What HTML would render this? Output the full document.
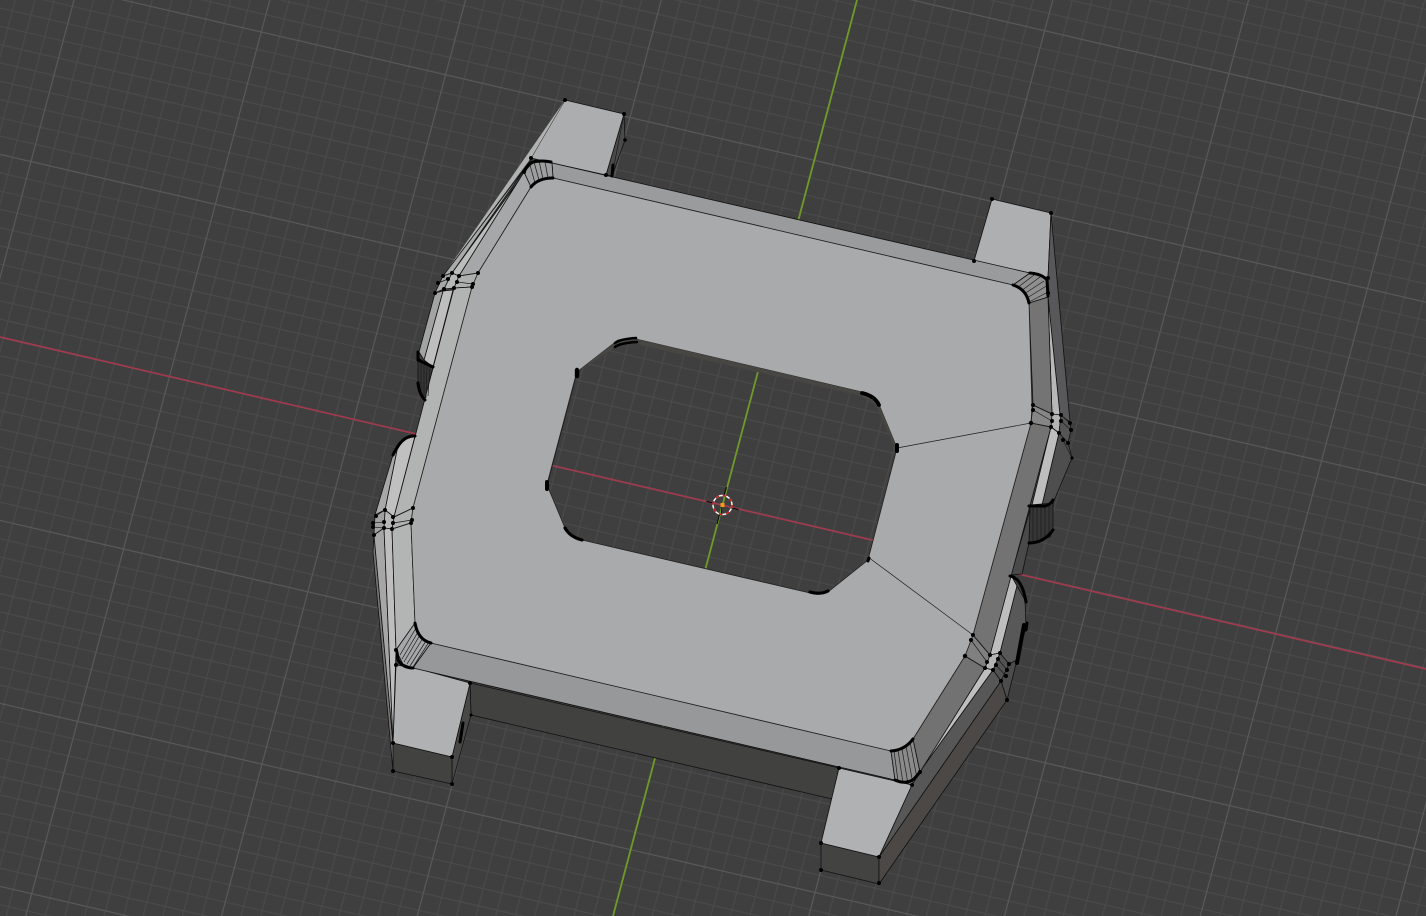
<!DOCTYPE html>
<html>
<head>
<meta charset="utf-8">
<title>Viewport</title>
<style>
html,body{margin:0;padding:0;background:#3f3f3f;width:1426px;height:916px;overflow:hidden}
svg{display:block}
</style>
</head>
<body>
<svg width="1426" height="916" viewBox="0 0 1426 916" xmlns="http://www.w3.org/2000/svg">
<defs>
<pattern id="g" patternUnits="userSpaceOnUse" x="0" y="0" width="184.36" height="172.35" patternTransform="matrix(1 .232 -.2664 1 715.58 494.244)">
<path d="M27.654 0V172.35M46.09 0V172.35M64.526 0V172.35M82.962 0V172.35M101.398 0V172.35M119.834 0V172.35M138.27 0V172.35M156.706 0V172.35M175.142 0V172.35M0 25.853H184.36M0 43.088H184.36M0 60.323H184.36M0 77.558H184.36M0 94.793H184.36M0 112.028H184.36M0 129.263H184.36M0 146.498H184.36M0 163.733H184.36" stroke="#4b4b4b" stroke-width="1" fill="none"/>
<path d="M9.218 0V172.35M0 8.6175H184.36" stroke="#5a5a5a" stroke-width="1.1" fill="none"/>
</pattern>
</defs>
<rect width="1426" height="916" fill="#3f3f3f"/>
<rect width="1426" height="916" fill="url(#g)"/>
<!-- axes -->
<line x1="0" y1="337" x2="1426" y2="669" stroke="#a03a4e" stroke-width="1.7"/>
<line x1="857" y1="0" x2="613" y2="916" stroke="#6f9a2a" stroke-width="1.8"/>

<!-- lugs and walls -->
<g stroke="#111" stroke-width=".8" stroke-linejoin="round">
<polygon points="470,683 839,768 832,799 471,715" fill="#41413f"/>
<polygon points="470,683 471,715 452,784 452,757" fill="#484847"/>
<polygon points="393,743 452,757 452,784 393,771" fill="#424240"/>
<polygon points="415,668 470,683 452,757 393,743 396,665" fill="#b0b1b3"/>
<polygon points="821,843 879,857 879,884 821,870" fill="#434341"/>
<polygon points="839,768 912,785 879,857 821,843" fill="#b0b1b3"/>
<polygon points="624,114 625,140 612,176 606,175" fill="#4a4a4a"/>
<polygon points="565,100 624,114 606,175 552,163 531,158" fill="#acadaf"/>
<polygon points="992,199 1051,213 1048,278 1030,273 974,261" fill="#aeafb1"/>

<!-- left rim -->
<polygon points="531,158 565,100 443,276" fill="#b0b1b1" stroke="none"/>
<polygon points="452,273 531,160 443,276" fill="#a9aaaa"/>
<polygon points="459,276 524,172 530,165 452,273" fill="#bbbcbc"/>
<polygon points="452,273 444,289 435,293 443,276" fill="#a6a7a7"/>
<polygon points="459,276 454,288 444,289 452,273" fill="#b6b7b7"/>
<polygon points="453,290 433,367 424,360 443,291" fill="#bebebe"/>
<polygon points="435,293 443,291 424,360 419,352" fill="#a2a3a3"/>
<polygon points="418,358 433,367 425,400 420,395 418,383" fill="#363636"/>
<polygon points="415,436 394,517 385,510 397,450 403,440" fill="#c0c0c0"/>
<polygon points="393,455 397,450 385,510 375,515" fill="#a8a8a8"/>
<polygon points="385,510 394,517 392,529 384,528" fill="#b6b6b6"/>
<polygon points="375,515 385,510 384,528 374,535" fill="#a0a0a0"/>
<polygon points="374,535 373,552 393,771 393,743" fill="#767676"/>
<polygon points="384,528 374,535 393,743" fill="#a6a6a6"/>
<polygon points="392,529 384,528 393,743 396,650" fill="#bebebe"/>

<!-- right rim -->
<polygon points="1048,278 1051,213 1070,422 1060,415 1048,297" fill="#58585a"/>
<polygon points="1048,297 1052,414 1060,415" fill="#b8b8b8"/>
<polygon points="1052,414 1061,415 1059,433 1051,427" fill="#b4b4b4"/>
<polygon points="1061,415 1070,423 1071,430 1068,443 1059,433" fill="#555"/>
<polygon points="1059,433 1068,443 1072,458 1053,503 1042,505" fill="#4e4e4e"/>
<polygon points="1051,427 1059,433 1042,505 1032,505" fill="#bebebe"/>
<polygon points="1030,505 1053,503 1053,530 1050,537 1029,543" fill="#363636"/>
<polygon points="1030,510 1029,543 1022,574 1011,575" fill="#4a4a4a"/>
<polygon points="1011,575 1017,586 1000,653 990,655" fill="#bebebe"/>
<polygon points="1017,586 1025,600 1026,627 1017,660 1009,664 1000,653" fill="#585858"/>
<polygon points="1001,681 1009,664 1017,660 1007,700" fill="#4c4c4c"/>
<polygon points="1001,681 1007,700 879,884 879,857" fill="#4b4845"/>
<polygon points="1000,653 1009,664 1001,681 993,670" fill="#525252"/>
<polygon points="993,670 1001,681 879,857 912,785 921,770" fill="#575757"/>
<polygon points="990,655 1000,653 993,670 985,668" fill="#b4b4b4"/>
<polygon points="985,668 993,670 921,770" fill="#bebebe"/>

<!-- bevel bands -->
<polygon points="478,273 531,187 524,172 459,276" fill="#a6a7a8"/>
<polygon points="478,273 472,287 454,288 459,276" fill="#aeafaf"/>
<polygon points="472,287 454,288 394,517 413,508" fill="#b2b3b3"/>
<polygon points="413,508 411,523 392,529 394,517" fill="#b0b1b1"/>
<polygon points="411,523 392,529 396,650 415,623" fill="#b3b4b4"/>
<polygon points="415,623 431,643 413,668 403,664 396,650" fill="#a6a7a8"/>
<polygon points="431,643 891,751 895,780 413,668" fill="#97989a"/>
<polygon points="891,751 913,739 920,772 912,785 895,780" fill="#8a8a8a"/>
<polygon points="913,739 965,656 985,668 920,772" fill="#727272"/>
<polygon points="965,656 973,635 990,655 985,668" fill="#808080"/>
<polygon points="1031,423 1051,427 990,655 973,635" fill="#737373"/>
<polygon points="1033,405 1052,414 1051,427 1031,423" fill="#868686"/>
<polygon points="1029,303 1048,297 1052,414 1033,405" fill="#747474"/>
<polygon points="1013,285 1029,303 1048,297 1048,278 1030,273" fill="#909090"/>
<polygon points="553,178 1013,285 1030,273 552,163" fill="#9a9b9d"/>
<polygon points="531,187 553,178 552,163 535,160 524,172" fill="#9d9e9f"/>
</g>

<!-- top face with hole -->
<path fill-rule="evenodd" fill="#a9aaac" stroke="#222" stroke-width=".8"
 d="M531 187Q538 178 553 178L1013 285Q1026 289 1029 303L1032 407L1031 423L973 635L965 656L913 739Q905 750 891 751L431 643Q418 640 415 623L411 523L413 508L472 287L478 273Z
 M577 372L618 340L636 339L862 392Q875 396 878 402L897 448L868 560L828 592L810 593L582 540Q570 537 565 528L547 485Z"/>

<!-- hole inner wall sliver -->
<polygon points="577,372 618,340 636,339 862,392 878,402 897,448 896,451 876,405 861,396 636,344 619,345" fill="#474642"/>
<polyline points="577,372 547,485" stroke="#222" stroke-width="1.2" fill="none"/>

<!-- wires -->
<g stroke="#1c1c1c" stroke-width=".7" fill="none">
<path d="M897 448L1031 423M868 557L973 635"/>
<path d="M535 183L530 165M539 180L534 162M543 179L539 161M548 178L545 162"/>
<path d="M1017 288L1034 275M1021 291L1040 277M1024 294L1044 281M1027 298L1048 285M1029 302L1048 292"/>
<path d="M894 751L898 781M898 750L903 783M902 749L908 784M906 746L913 784M910 742L917 778"/>
<path d="M416 628L400 655M418 632L402 659M420 635L404 662M423 638L407 664M426 641L410 666M429 642L413 667"/>
<path d="M421 362L421 392M424 363L424 396M427 364L426 398M430 366L428 396"/>
<path d="M1033 505L1033 541M1037 505L1037 541M1041 505L1041 540M1045 505L1045 539M1049 504L1049 537"/>
<path d="M459 276L478 273M457 282L473 284M454 288L472 287M452 273L443 276M448 279L438 283M444 289L435 293"/>
<path d="M394 517L413 508M393 523L412 520M392 529L411 523M385 510L376 516M384 522L373 523M384 528L373 527"/>
<path d="M1033 405L1052 414M1033 410L1052 421M1031 423L1051 427M1061 415L1070 423M1061 421L1071 430M1059 433L1068 443M1063 440L1072 458"/>
<path d="M973 635L990 655M971 640L987 662M965 656L985 668M1000 653L1009 664M998 659L1007 670M996 665L1006 676M993 670L1001 681"/>
<path d="M624 114L612 176"/>
</g>

<!-- thick arcs -->
<g stroke="#000" stroke-width="3" fill="none" stroke-linecap="round">
<path d="M531 187Q538 178 553 178"/>
<path d="M524 172Q527 165 533 162Q542 160 551 162"/>
<path d="M1013 285Q1026 289 1029 303"/>
<path d="M1030 273Q1042 274 1047 280L1048 296"/>
<path d="M891 751Q905 750 913 739"/>
<path d="M895 780Q906 785 914 779L920 772"/>
<path d="M415 623Q418 640 431 643"/>
<path d="M397 652L398 660Q403 668 413 668"/>
<path d="M418 352L418 360L433 367M418 383Q419 394 425 400"/>
<path d="M415 436Q402 435 393 455" stroke-width="3"/>
<path d="M1029 506L1045 506Q1050 505 1053 500M1029 543Q1044 543 1053 530"/>
<path d="M1010 576Q1022 578 1026 602"/>
<path d="M1017 663L1024 625" stroke-width="4"/>
<path d="M1027 623L1026 630" stroke-width="3"/>
<path d="M615 343Q620 339 636 338M615 347Q620 343 637 342" stroke-width="2.6"/>
<path d="M862 393Q875 396 879 405" stroke-width="3.8"/>
<path d="M577 370L577 376" stroke-width="4.4"/>
<path d="M897 445L897 451" stroke-width="4"/>
<path d="M547 482L547 489" stroke-width="4"/>
<path d="M869 558L868 561" stroke-width="3"/>
<path d="M810 592Q820 595 828 591" stroke-width="3.2"/>
<path d="M565 528Q570 537 582 540" stroke-width="3.2"/>
<path d="M463 723L460 742" stroke-width="3"/>
<path d="M613 165L612 176" stroke-width="3"/>
</g>

<!-- vertices -->
<g fill="#000">
<circle cx="565" cy="100" r="2"/><circle cx="624" cy="114" r="2"/><circle cx="625" cy="140" r="1.8"/><circle cx="606" cy="175" r="2"/>
<circle cx="992" cy="199" r="2"/><circle cx="1051" cy="213" r="2"/><circle cx="974" cy="261" r="2"/>
<circle cx="393" cy="743" r="2"/><circle cx="452" cy="757" r="2"/><circle cx="452" cy="784" r="2"/><circle cx="393" cy="771" r="2"/><circle cx="470" cy="683" r="2"/><circle cx="471" cy="715" r="1.5"/>
<circle cx="821" cy="843" r="2"/><circle cx="879" cy="857" r="2"/><circle cx="879" cy="883" r="2"/><circle cx="821" cy="870" r="2"/><circle cx="839" cy="768" r="2"/>
<circle cx="1007" cy="700" r="2"/><circle cx="1001" cy="681" r="2"/><circle cx="1009" cy="664" r="2"/><circle cx="1007" cy="670" r="2"/><circle cx="1006" cy="676" r="2"/>
<circle cx="443" cy="276" r="2"/><circle cx="452" cy="273" r="2"/><circle cx="459" cy="276" r="2"/><circle cx="478" cy="273" r="2"/>
<circle cx="438" cy="283" r="2"/><circle cx="448" cy="279" r="2"/><circle cx="457" cy="282" r="2"/><circle cx="473" cy="284" r="2"/>
<circle cx="435" cy="293" r="2"/><circle cx="444" cy="289" r="2"/><circle cx="454" cy="288" r="2"/><circle cx="472" cy="287" r="2"/>
<circle cx="376" cy="516" r="2"/><circle cx="373" cy="523" r="2"/><circle cx="373" cy="527" r="2"/><circle cx="374" cy="535" r="2"/>
<circle cx="385" cy="510" r="2"/><circle cx="384" cy="522" r="2"/><circle cx="384" cy="528" r="2"/>
<circle cx="393" cy="517" r="2"/><circle cx="393" cy="523" r="2"/><circle cx="392" cy="529" r="2"/>
<circle cx="413" cy="508" r="2"/><circle cx="412" cy="520" r="2"/><circle cx="411" cy="523" r="2"/>
<circle cx="1033" cy="405" r="2"/><circle cx="1033" cy="410" r="2"/><circle cx="1031" cy="423" r="2.2"/>
<circle cx="1052" cy="414" r="2"/><circle cx="1052" cy="421" r="2"/><circle cx="1051" cy="427" r="2"/>
<circle cx="1061" cy="415" r="2"/><circle cx="1061" cy="421" r="2"/><circle cx="1059" cy="433" r="2"/>
<circle cx="1070" cy="423" r="2"/><circle cx="1071" cy="430" r="2"/><circle cx="1068" cy="443" r="2"/><circle cx="1063" cy="440" r="2"/><circle cx="1072" cy="458" r="1.6"/>
<circle cx="973" cy="635" r="2"/><circle cx="971" cy="640" r="2"/><circle cx="965" cy="656" r="2.2"/>
<circle cx="990" cy="655" r="2"/><circle cx="987" cy="662" r="2"/><circle cx="985" cy="668" r="2"/>
<circle cx="1000" cy="653" r="2"/><circle cx="998" cy="659" r="2"/><circle cx="996" cy="665" r="2"/><circle cx="993" cy="670" r="2"/>
<circle cx="531" cy="158" r="2"/><circle cx="524" cy="172" r="2"/><circle cx="912" cy="785" r="2"/><circle cx="920" cy="772" r="2"/>
<circle cx="396" cy="650" r="2"/><circle cx="396" cy="665" r="2"/><circle cx="1048" cy="278" r="2"/><circle cx="1048" cy="293" r="2"/>
</g>

<!-- 3D cursor -->
<g fill="none">
<path d="M706.5 501.4L713 503M731.5 507.8L738.5 509.5M726.5 487L724 496M719.5 514.5L717 524M722 503L721.5 514" stroke="#000" stroke-width="1"/>
<circle cx="722.5" cy="505" r="9.5" stroke="#fff" stroke-width="1.4"/>
<circle cx="722.5" cy="505" r="9.5" stroke="#d01818" stroke-width="1.4" stroke-dasharray="3.7 3.75"/>
</g>
<rect x="720.5" y="503" width="4" height="4" fill="#f59a1a"/>
</svg>
</body>
</html>
